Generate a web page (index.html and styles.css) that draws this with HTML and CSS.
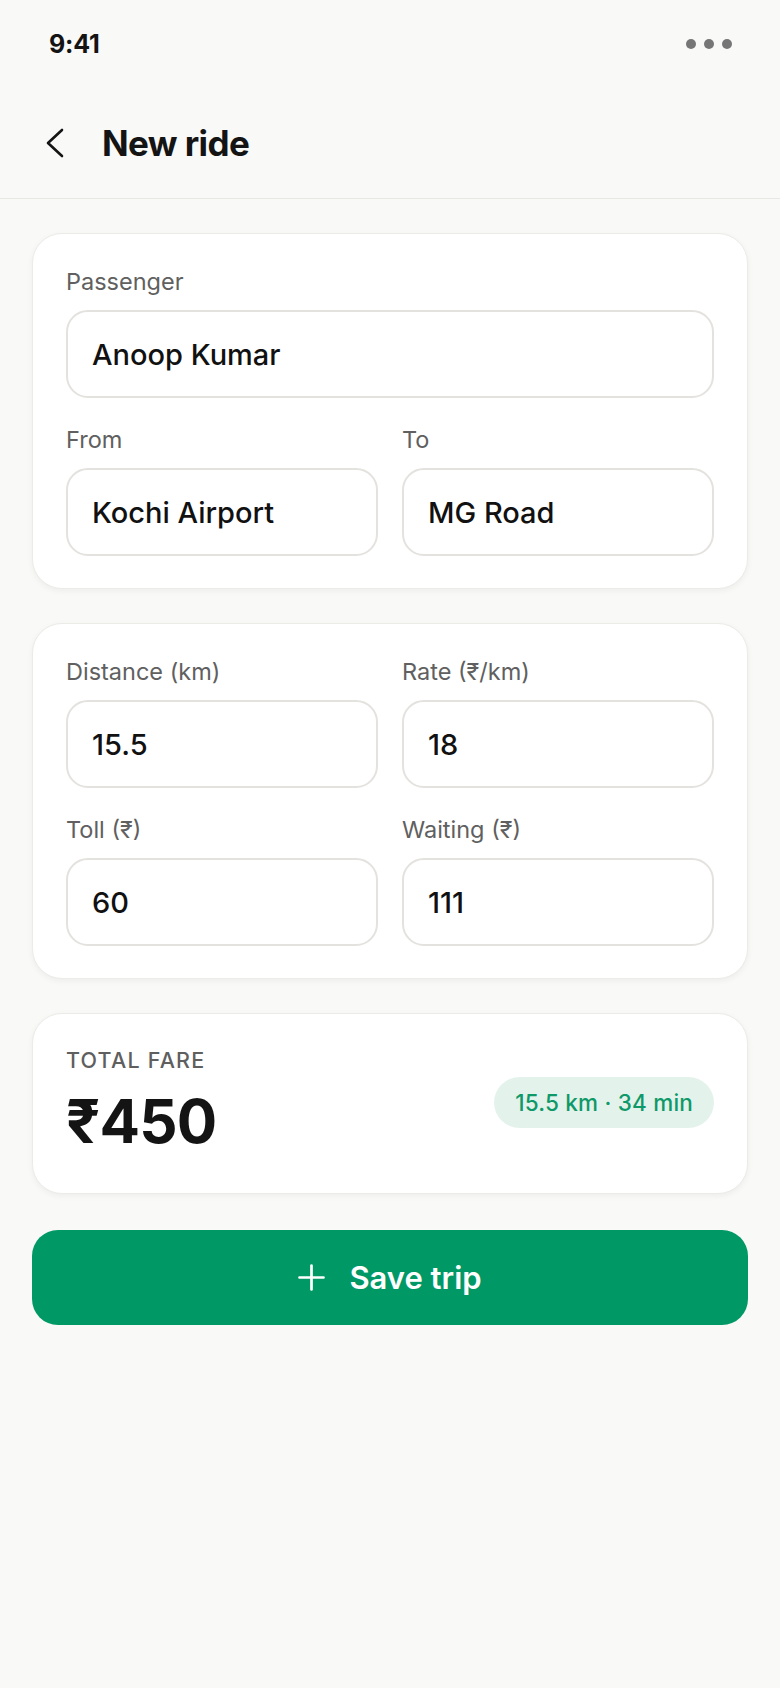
FILE: index.html
```html
<!DOCTYPE html>
<html lang="en">
<head>
<meta charset="utf-8">
<title>New ride</title>
<link rel="stylesheet" href="styles.css">
</head>
<body>
<div class="app">
  <div class="status-bar">
    <span class="time">9:41</span>
    <span class="dots"><i></i><i></i><i></i></span>
  </div>
  <header class="top-bar">
    <svg class="back" width="32" height="32" viewBox="0 0 32 32" fill="none" stroke="#141414" stroke-width="2.6" stroke-linecap="round" stroke-linejoin="round"><path d="M22 3 L8 16 L22 29"/></svg>
    <h1 class="title">New ride</h1>
  </header>
  <main class="content">
    <section class="card">
      <div class="field">
        <label class="label">Passenger</label>
        <div class="input">Anoop Kumar</div>
      </div>
      <div class="row">
        <div class="field">
          <label class="label">From</label>
          <div class="input">Kochi Airport</div>
        </div>
        <div class="field">
          <label class="label">To</label>
          <div class="input">MG Road</div>
        </div>
      </div>
    </section>
    <section class="card">
      <div class="row">
        <div class="field">
          <label class="label">Distance (km)</label>
          <div class="input">15.5</div>
        </div>
        <div class="field">
          <label class="label">Rate (₹/km)</label>
          <div class="input">18</div>
        </div>
      </div>
      <div class="row">
        <div class="field">
          <label class="label">Toll (₹)</label>
          <div class="input">60</div>
        </div>
        <div class="field">
          <label class="label">Waiting (₹)</label>
          <div class="input">111</div>
        </div>
      </div>
    </section>
    <section class="card fare-card">
      <div class="fare-info">
        <div class="fare-label">TOTAL FARE</div>
        <div class="fare-amount">₹450</div>
      </div>
      <span class="badge">15.5 km · 34 min</span>
    </section>
    <button class="save-btn">
      <svg width="27" height="27" viewBox="0 0 27 27" fill="none" stroke="#ffffff" stroke-width="2.7" stroke-linecap="round"><path d="M13.5 1.5v24M1.5 13.5h24"/></svg>
      <span>Save trip</span>
    </button>
  </main>
</div>
</body>
</html>
```

FILE: styles.css
```css
* { box-sizing: border-box; }
html, body {
  margin: 0;
  padding: 0;
  background: #f9f9f7;
}
body {
  font-family: Inter, "Noto Sans", "DejaVu Sans", sans-serif;
  color: #141414;
  min-height: 1688px;
}
.status-bar {
  height: 88px;
  display: flex;
  align-items: center;
  justify-content: space-between;
  padding: 0 48px 0 49px;
}
.time {
  font-size: 25px;
  font-weight: 700;
  letter-spacing: -0.2px;
  color: #141414;
}
.dots {
  display: flex;
  gap: 8px;
}
.dots i {
  display: block;
  width: 10px;
  height: 10px;
  border-radius: 50%;
  background: #767676;
}
.top-bar {
  height: 111px;
  display: flex;
  align-items: center;
  padding-left: 40px;
  gap: 30px;
  border-bottom: 1px solid #e7e7e3;
}
.back { display: block; flex: none; }
.title {
  margin: 0;
  font-size: 35px;
  font-weight: 700;
  letter-spacing: -0.6px;
  color: #141414;
}
.content {
  padding: 34px 32px;
  display: flex;
  flex-direction: column;
  gap: 34px;
}
.card {
  background: #ffffff;
  border: 1px solid #ebebe7;
  border-radius: 30px;
  box-shadow: 0 2px 6px rgba(0, 0, 0, 0.05);
  padding: 33px 33px 32px;
  display: flex;
  flex-direction: column;
  gap: 27px;
}
.row {
  display: grid;
  grid-template-columns: 1fr 1fr;
  gap: 24px;
}
.field {
  display: flex;
  flex-direction: column;
  gap: 13px;
}
.label {
  font-size: 23.5px;
  line-height: 30px;
  color: #606060;
  font-weight: 400;
}
.input {
  height: 88px;
  border: 2px solid #e3e2de;
  border-radius: 22px;
  background: #ffffff;
  display: flex;
  align-items: center;
  padding: 0 24px;
  font-size: 29px;
  font-weight: 500;
  color: #111111;
}
.fare-card {
  flex-direction: row;
  align-items: center;
  justify-content: space-between;
  padding: 33px 33px 35px;
}
.fare-info {
  display: flex;
  flex-direction: column;
}
.fare-label {
  font-size: 21.5px;
  line-height: 26px;
  letter-spacing: 1.2px;
  font-weight: 500;
  color: #5f5f5f;
}
.fare-amount {
  margin-top: 11px;
  font-size: 60px;
  line-height: 74px;
  font-weight: 700;
  letter-spacing: -0.8px;
  color: #141414;
}
.badge {
  height: 51px;
  display: flex;
  align-items: center;
  padding: 0 21px;
  border-radius: 26px;
  background: #e3f3ec;
  color: #0f9968;
  font-size: 22.5px;
  letter-spacing: 0.2px;
  font-weight: 500;
}
.save-btn {
  margin-top: 2px;
  height: 95px;
  border: none;
  border-radius: 26px;
  background: #009966;
  color: #ffffff;
  display: flex;
  align-items: center;
  justify-content: center;
  gap: 24px;
  font-family: inherit;
  font-size: 31px;
  font-weight: 600;
  cursor: pointer;
}
.save-btn svg { display: block; }
```
